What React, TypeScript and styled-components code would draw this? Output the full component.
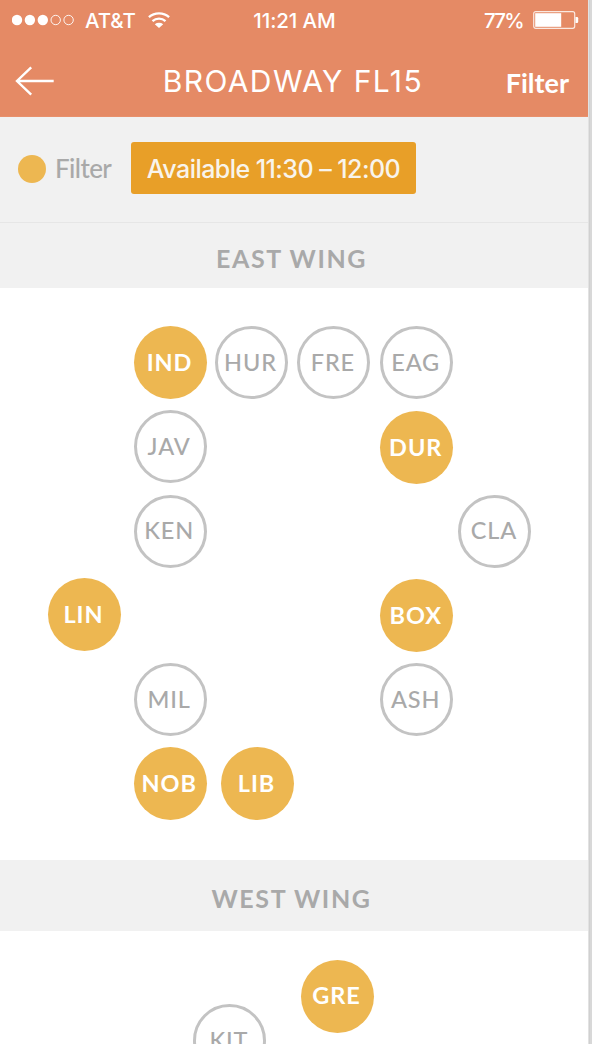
import React from 'react';
import styled, { createGlobalStyle, css } from 'styled-components';

const GlobalStyle = createGlobalStyle`
  * { box-sizing: border-box; }
  body { margin: 0; background: #ffffff; font-family: Lato, 'Liberation Sans', sans-serif; }
`;

const Frame = styled.div`
  display: flex;
  width: 592px;
  height: 1044px;
  overflow: hidden;
  background: #d9d9d9;
`;

const Screen = styled.main`
  flex: none;
  display: flex;
  flex-direction: column;
  width: 588px;
  background: #ffffff;
`;

const Edge = styled.div`
  width: 4px;
  background: linear-gradient(90deg, #e2e2e2 0 25%, #d0d0d0 25% 50%, #d8d8d8 50% 100%);
`;

const Header = styled.header`
  flex: none;
  height: 117px;
  background: #e58a65;
  border-bottom: 1px solid #e8906c;
  color: #ffffff;
`;

const StatusBar = styled.div`
  display: grid;
  grid-template-columns: 1fr auto 1fr;
  align-items: center;
  height: 40px;
  padding: 0 9px 0 12px;
  font-family: Inter, 'Liberation Sans', sans-serif;
`;

const StatusGroup = styled.div<{ $end?: boolean }>`
  display: flex;
  align-items: center;
  justify-content: ${(p) => (p.$end ? 'flex-end' : 'flex-start')};
`;

const StatusText = styled.span<{ $tracking: number }>`
  padding-top: 1px;
  font-size: 20.5px;
  font-weight: 500;
  line-height: 24px;
  letter-spacing: ${(p) => p.$tracking}px;
  white-space: nowrap;
`;

const Clock = styled(StatusText)`
  margin-right: 2px;
`;

const Charge = styled(StatusText)`
  margin-right: 10px;
`;

const Carrier = styled(StatusText)`
  margin: 0 12px 0 11px;
`;

const NavBar = styled.nav`
  display: flex;
  align-items: center;
  height: 76px;
  padding: 5px 19px 0 15px;
`;

const NavButton = styled.button`
  display: flex;
  padding: 0;
  border: 0;
  background: none;
  color: inherit;
`;

const NavTitle = styled.h1`
  flex: 1;
  margin: 0;
  padding: 1px 0 0 25px;
  text-align: center;
  font-family: Inter, 'Liberation Sans', sans-serif;
  font-size: 30px;
  line-height: 36px;
  font-weight: 400;
  letter-spacing: 1.4px;
  white-space: nowrap;
`;

const FilterLink = styled(NavButton)`
  padding-top: 5px;
  font-family: Lato, 'Liberation Sans', sans-serif;
  font-size: 27px;
  line-height: 32px;
  font-weight: 700;
`;

const FilterBar = styled.div`
  flex: none;
  display: flex;
  align-items: center;
  height: 106px;
  padding: 0 18px 3px;
  background: #f1f1f1;
  border-bottom: 1px solid #e6e6e6;
`;

const Dot = styled.span`
  width: 28px;
  height: 28px;
  margin-top: 1px;
  border-radius: 50%;
  background: #edb751;
`;

const FilterLabel = styled.span`
  width: 76px;
  margin-left: 9px;
  color: #a9a9a9;
  font-size: 26px;
  font-weight: 500;
  line-height: 32px;
  letter-spacing: -0.6px;
`;

const Chip = styled.button`
  width: 285px;
  height: 52px;
  padding: 1px 0 0;
  border: 0;
  border-radius: 3px;
  background: #e89f28;
  color: #f8f4ec;
  font-family: Inter, 'Liberation Sans', sans-serif;
  font-size: 25px;
  font-weight: 500;
  letter-spacing: -0.55px;
  white-space: nowrap;
`;

const WingTitle = styled.h2<{ $height: number; $drop: number }>`
  flex: none;
  height: ${(p) => p.$height}px;
  margin: 0;
  padding: ${(p) => p.$drop}px 5px 0 0;
  background: #f1f1f1;
  color: #a9a9a9;
  text-align: center;
  font-size: 25px;
  line-height: 30px;
  font-weight: 700;
  letter-spacing: 1.6px;
`;

const Plan = styled.section<{ $height: number }>`
  flex: none;
  position: relative;
  height: ${(p) => p.$height}px;
  overflow: hidden;
`;

const RoomPin = styled.div<{ $x: number; $y: number; $free?: boolean }>`
  position: absolute;
  left: ${(p) => p.$x}px;
  top: ${(p) => p.$y}px;
  display: flex;
  align-items: center;
  justify-content: center;
  width: 73px;
  height: 73px;
  padding: 0 2px 2px 0;
  border-radius: 50%;
  font-size: 23.5px;
  line-height: 28px;
  letter-spacing: 0.9px;
  ${(p) =>
    p.$free
      ? css`
          background: #edb751;
          color: #ffffff;
          font-weight: 700;
        `
      : css`
          border: 3px solid #c3c3c3;
          color: #a9a9a9;
          font-weight: 500;
        `}
`;

type Room = { name: string; x: number; y: number; free?: boolean };

const eastWing: Room[] = [
  { name: 'IND', x: 134, y: 38, free: true },
  { name: 'HUR', x: 215, y: 38 },
  { name: 'FRE', x: 297.4, y: 38 },
  { name: 'EAG', x: 380.2, y: 38 },
  { name: 'JAV', x: 133.7, y: 122 },
  { name: 'DUR', x: 380.2, y: 123, free: true },
  { name: 'KEN', x: 133.7, y: 206.6 },
  { name: 'CLA', x: 458.4, y: 206.6 },
  { name: 'LIN', x: 48, y: 290.4, free: true },
  { name: 'BOX', x: 380.2, y: 291.4, free: true },
  { name: 'MIL', x: 133.7, y: 375 },
  { name: 'ASH', x: 380.2, y: 375 },
  { name: 'NOB', x: 133.7, y: 459, free: true },
  { name: 'LIB', x: 221, y: 459, free: true },
];

const westWing: Room[] = [
  { name: 'GRE', x: 301, y: 28.6, free: true },
  { name: 'KIT', x: 193.4, y: 73 },
];

const Rooms = ({ rooms, height }: { rooms: Room[]; height: number }) => (
  <Plan $height={height}>
    {rooms.map((r) => (
      <RoomPin key={r.name} $x={r.x} $y={r.y} $free={r.free}>
        {r.name}
      </RoomPin>
    ))}
  </Plan>
);

const Signal = () => (
  <svg width="62" height="12" viewBox="0 0 62 12">
    {[0, 1, 2].map((i) => (
      <circle key={i} cx={5 + i * 12.9} cy="6" r="5.2" fill="#fff" />
    ))}
    {[3, 4].map((i) => (
      <circle key={i} cx={5 + i * 12.9} cy="6" r="4.7" fill="none" stroke="#fff" strokeWidth="0.9" />
    ))}
  </svg>
);

const Wifi = () => (
  <svg width="22" height="17" viewBox="0 0 22 17" fill="none" stroke="#fff" strokeWidth="2.3">
    <path d="M0.9 5.2 C6.5 0.1 15.5 0.1 21.1 5.2" />
    <path d="M4.5 9.2 C8.2 5.8 13.8 5.8 17.5 9.2" />
    <path d="M11 16 L6.8 12.2 C9.3 10.4 12.7 10.4 15.2 12.2 Z" fill="#fff" stroke="none" />
  </svg>
);

const Battery = () => (
  <svg width="46" height="18" viewBox="0 0 46 18">
    <rect x="0.7" y="0.7" width="41" height="16.6" rx="2" fill="none" stroke="#fff" strokeOpacity="0.8" strokeWidth="1.2" />
    <rect x="2.2" y="2.2" width="26" height="13.6" fill="#fff" />
    <path d="M42.5 6 h1.5 q1.2 0 1.2 1.2 v3.6 q0 1.2 -1.2 1.2 h-1.5 Z" fill="#fff" />
  </svg>
);

const BackArrow = () => (
  <svg width="40" height="30" viewBox="0 0 40 30" fill="none" stroke="#fff" strokeWidth="2.4">
    <path d="M38.7 15 H2 M16.2 1.3 L2 15 L16.2 28.7" />
  </svg>
);

export default function App() {
  return (
    <>
      <GlobalStyle />
      <Frame>
        <Screen>
          <Header>
            <StatusBar>
              <StatusGroup>
                <Signal />
                <Carrier $tracking={-0.1}>AT&amp;T</Carrier>
                <Wifi />
              </StatusGroup>
              <Clock $tracking={-0.1}>11:21 AM</Clock>
              <StatusGroup $end>
                <Charge $tracking={-1.7}>77%</Charge>
                <Battery />
              </StatusGroup>
            </StatusBar>
            <NavBar>
              <NavButton aria-label="Back">
                <BackArrow />
              </NavButton>
              <NavTitle>BROADWAY FL15</NavTitle>
              <FilterLink>Filter</FilterLink>
            </NavBar>
          </Header>
          <FilterBar>
            <Dot />
            <FilterLabel>Filter</FilterLabel>
            <Chip>Available 11:30 – 12:00</Chip>
          </FilterBar>
          <WingTitle $height={65} $drop={20}>EAST WING</WingTitle>
          <Rooms rooms={eastWing} height={572} />
          <WingTitle $height={71} $drop={23}>WEST WING</WingTitle>
          <Rooms rooms={westWing} height={113} />
        </Screen>
        <Edge />
      </Frame>
    </>
  );
}
